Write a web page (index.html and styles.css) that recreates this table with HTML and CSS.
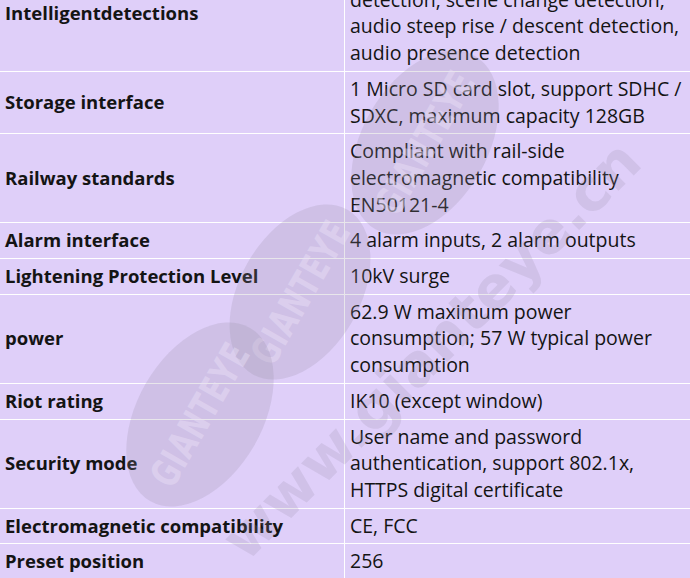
FILE: index.html
```html
<!DOCTYPE html>
<html>
<head>
<meta charset="utf-8">
<link rel="stylesheet" href="styles.css">
</head>
<body>
<div class="page">
  <table class="spec">
    <tr><th>Intelligentdetections</th><td>Cross-line detection, area intrusion<br>detection, scene change detection,<br>audio steep rise / descent detection,<br>audio presence detection</td></tr>
    <tr><th>Storage interface</th><td>1 Micro SD card slot, support SDHC /<br>SDXC, maximum capacity 128GB</td></tr>
    <tr><th>Railway standards</th><td>Compliant with rail-side<br>electromagnetic compatibility<br>EN50121-4</td></tr>
    <tr><th>Alarm interface</th><td>4 alarm inputs, 2 alarm outputs</td></tr>
    <tr><th>Lightening Protection Level</th><td>10kV surge</td></tr>
    <tr><th>power</th><td>62.9 W maximum power<br>consumption; 57 W typical power<br>consumption</td></tr>
    <tr><th>Riot rating</th><td>IK10 (except window)</td></tr>
    <tr><th>Security mode</th><td>User name and password<br>authentication, support 802.1x,<br>HTTPS digital certificate</td></tr>
    <tr><th>Electromagnetic compatibility</th><td>CE, FCC</td></tr>
    <tr><th>Preset position</th><td>256</td></tr>
  </table>
  <div class="wm wm-a"><span>GIANTEYE</span></div>
  <div class="wm wm-b"><span>GIANTEYE</span></div>
  <div class="wm wm-c"><span>GIANTEYE</span></div>
  <div class="url">www.gianteye.cn</div>
</div>
</body>
</html>
```
FILE: styles.css
```css
html, body {
  margin: 0;
  padding: 0;
  background: #dfcff9;
}
.page {
  position: relative;
  width: 690px;
  height: 578px;
  overflow: hidden;
  background: #dfcff9;
}
.spec {
  width: 690px;
  border-collapse: collapse;
  margin-top: -45px;
  font-family: "Open Sans", "Noto Sans", sans-serif;
  font-size: 19.5px;
  line-height: 26.7px;
  color: #141414;
}
.spec th, .spec td {
  border: 1px solid #ffffff;
  padding: 4px 5px;
  text-align: left;
  vertical-align: middle;
  white-space: nowrap;
}
.spec th {
  width: 334px;
  font-size: 18.5px;
  font-weight: 700;
  border-left: none;
}
.spec td {
  font-weight: 400;
  border-right: none;
}
.wm {
  position: absolute;
  border-radius: 50%;
  background: rgba(150, 140, 165, 0.22);
  display: flex;
  align-items: center;
  justify-content: center;
  pointer-events: none;
}
.wm span {
  font-family: "Liberation Sans Narrow", "DejaVu Sans Condensed", sans-serif;
  font-weight: 700;
  font-size: 30px;
  color: rgba(235, 225, 248, 0.45);
  letter-spacing: 1px;
  transform: scaleY(1.3);
}
.wm-a {
  left: 325px;
  top: 80px;
  width: 200px;
  height: 125px;
  transform: rotate(-60deg);
}
.wm-b {
  left: 205px;
  top: 232px;
  width: 190px;
  height: 120px;
  transform: rotate(-60deg);
}
.wm-c {
  left: 100px;
  top: 352px;
  width: 200px;
  height: 125px;
  transform: rotate(-60deg);
}
.url {
  position: absolute;
  left: 232px;
  top: 515px;
  font-family: "DejaVu Sans", sans-serif;
  font-weight: 700;
  font-size: 58px;
  color: rgba(150, 140, 165, 0.2);
  transform: rotate(-45deg);
  transform-origin: 0 50%;
  white-space: nowrap;
  pointer-events: none;
}
```
